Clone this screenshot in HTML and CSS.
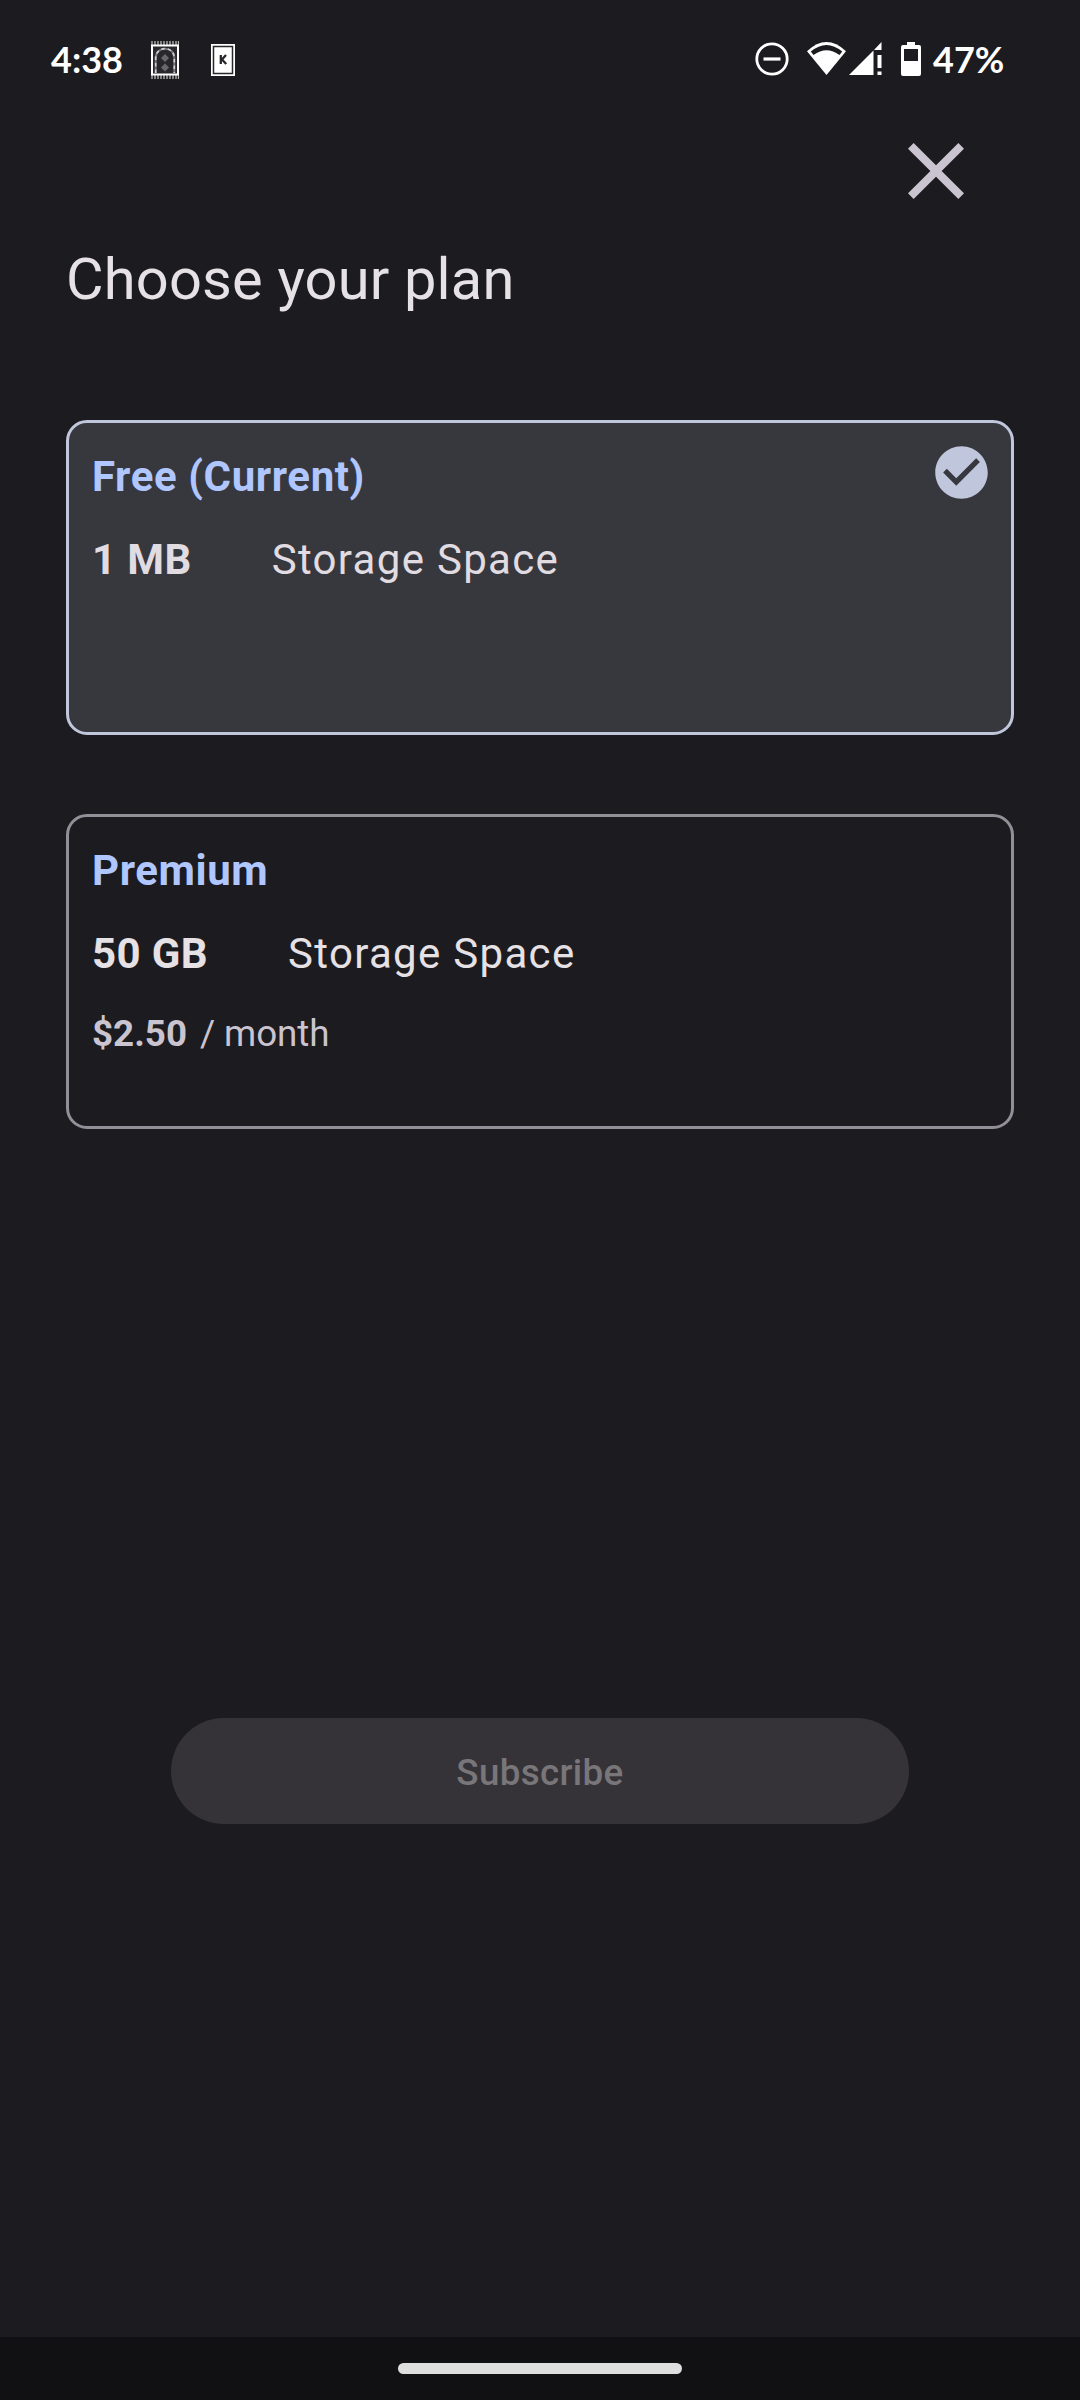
FILE: index.html
```html
<!DOCTYPE html>
<html lang="en">
<head>
<meta charset="utf-8">
<title>Choose your plan</title>
<link rel="stylesheet" href="styles.css">
</head>
<body>
<div class="screen">
  <header class="status">
    <div class="status-left">
      <span class="clock">4:38</span>
      <svg class="rug" width="28" height="38" viewBox="0 0 28 38">
        <path d="M1 0v38M4 0v38M7 0v38M10 0v38M13 0v38M16 0v38M19 0v38M22 0v38M25 0v38M27.5 0v38" stroke="#bbb" stroke-width="1.3"/>
        <rect y="3.500" width="28" height="31" fill="#fff"/>
        <rect x="2" y="5.500" width="24" height="27" fill="#28272b"/>
        <path d="M4.700 32V17C4.700 4.500 23.300 4.500 23.300 17V32" fill="none" stroke="#77767a" stroke-width="2"/>
        <path d="M4.700 32V17C4.700 4.500 23.300 4.500 23.300 17V32" fill="none" stroke="#d0d0d0" stroke-width="1.600" stroke-dasharray="3.500 3"/>
        <path d="M14 13l4 4-4 4-4-4zM14 22.500l4 4-4 4-4-4z" fill="#68676b"/>
      </svg>
      <svg class="card-icon" width="24" height="32" viewBox="0 0 24 32">
        <rect width="24" height="32" fill="#fff"/>
        <rect x="2.500" y="2.500" width="19" height="27" fill="none" stroke="#28272b" stroke-width="1.500"/>
        <path d="M9.800 11v9M15 11l-4 4.500 4.200 4.500" fill="none" stroke="#28272b" stroke-width="2.300"/>
      </svg>
    </div>
    <div class="status-right">
      <svg class="dnd" width="34" height="34" viewBox="0 0 34 34" fill="none" stroke="#fff"><circle cx="17" cy="17" r="15.200" stroke-width="2.800"/><path d="M8.500 17h17" stroke-width="3.200"/></svg>
      <svg class="wifi" width="39" height="33" viewBox="0 0 39 33"><path d="M0 9.200Q19.500-9.200 39 9.200L19.500 33z" fill="#fff"/><path d="M3.800 9.600Q19.500-3.600 35.200 9.600L32.500 12.900Q19.500 3.500 6.500 12.900z" fill="#1c1b1f"/></svg>
      <svg class="signal" width="33" height="33" viewBox="0 0 33 33" fill="#fff"><path d="M0 33L24.500 8.500V33zM25 8l7.500-8v8zM28.500 13h4v13h-4zM28.500 29.500h4V33h-4z"/></svg>
      <svg class="battery" width="20" height="34" viewBox="0 0 20 34"><path fill="#fff" fill-rule="evenodd" d="M6 0h8v3h4q2 0 2 2v27q0 2-2 2H2q-2 0-2-2V5q0-2 2-2h4zM3 7v12h14V7z"/></svg>
      <span class="percent">47%</span>
    </div>
  </header>
  <div class="toolbar">
    <svg class="close" width="96" height="96" viewBox="0 0 24 24" fill="#cac4d0"><path d="M19 6.410L17.590 5 12 10.590 6.410 5 5 6.410 10.590 12 5 17.590 6.410 19 12 13.410 17.590 19 19 17.590 13.410 12z"/></svg>
  </div>
  <main class="content">
    <h1 class="title">Choose your plan</h1>
    <section class="plan selected">
      <div class="details">
        <h2 class="name">Free (Current)</h2>
        <p class="storage"><b>1 MB</b><span>Storage Space</span></p>
      </div>
      <svg class="check" width="63" height="63" viewBox="0 0 24 24" fill="#c0c6dc"><path d="M12 2C6.480 2 2 6.480 2 12s4.480 10 10 10 10-4.480 10-10S17.520 2 12 2zm-2 15l-5-5 1.410-1.410L10 14.170l7.590-7.590L19 8l-9 9z"/></svg>
    </section>
    <section class="plan">
      <div class="details">
        <h2 class="name">Premium</h2>
        <p class="storage"><b>50 GB</b><span>Storage Space</span></p>
        <p class="price"><b>$2.50</b><span>/ month</span></p>
      </div>
    </section>
    <button class="subscribe" disabled>Subscribe</button>
  </main>
  <footer class="nav"><div class="handle"></div></footer>
</div>
</body>
</html>
```
FILE: styles.css
```css
* { box-sizing: border-box; margin: 0; padding: 0; }
body { background: #1c1b1f; font-family: Roboto, "Liberation Sans", sans-serif; }
svg { display: block; flex: none; }
.screen { width: 1080px; height: 2400px; display: flex; flex-direction: column; color: #e6e1e5; }
.status { height: 119px; padding: 0 75px 0 51px; display: flex; justify-content: space-between; align-items: flex-start; color: #fff; font: 700 36px/44px Lato, sans-serif; }
.status-left, .status-right { display: flex; align-items: flex-start; }
.clock { width: 72px; margin: 37px 28px 0 0; white-space: nowrap; }
.rug { margin-top: 41px; }
.card-icon { margin: 44px 0 0 32px; }
.dnd { margin-top: 42px; }
.wifi { margin: 42px 0 0 18px; }
.signal { margin: 42px 0 0 3px; }
.battery { margin: 42px 0 0 19px; }
.percent { width: 72px; margin: 37px 0 0 12px; white-space: nowrap; }
.toolbar { height: 124px; padding: 4px 96.500px 0 0; display: flex; justify-content: flex-end; }
.content { flex: 1; padding: 0 66px; display: flex; flex-direction: column; }
.title { height: 177px; font-size: 57.750px; line-height: 73px; font-weight: 400; letter-spacing: 0.200px; }
.plan { height: 315px; margin-bottom: 79px; border: 3px solid #938f99; border-radius: 21px; padding: 22px 18px 0 23px; display: flex; justify-content: space-between; align-items: flex-start; }
.selected { background: #37383d; border-color: #c0c6dc; color: #e0dce1; }
.check { margin-top: -4px; }
.details { display: flex; flex-direction: column; }
.name { color: #b0c6ff; font-size: 42px; line-height: 63px; font-weight: 700; letter-spacing: 0.600px; }
.storage { margin-top: 20px; display: flex; gap: 80px; font-size: 42px; line-height: 63px; }
.storage b { font-weight: 700; letter-spacing: 0.400px; }
.storage span { letter-spacing: 1.310px; }
.price { margin-top: 22px; display: flex; gap: 13px; font-size: 36.750px; line-height: 53px; color: #cac4d0; }
.price span { letter-spacing: -0.100px; }
.subscribe { width: 738px; height: 106px; margin: 510px auto 0; padding-top: 3px; border: 0; border-radius: 53px; background: #363338; color: #79767a; font: 500 36.750px/52px Roboto, sans-serif; letter-spacing: 0.350px; }
.nav { height: 63px; background: #111113; display: flex; justify-content: center; padding-top: 26px; }
.handle { width: 284px; height: 11px; border-radius: 6px; background: #dedede; }
```
